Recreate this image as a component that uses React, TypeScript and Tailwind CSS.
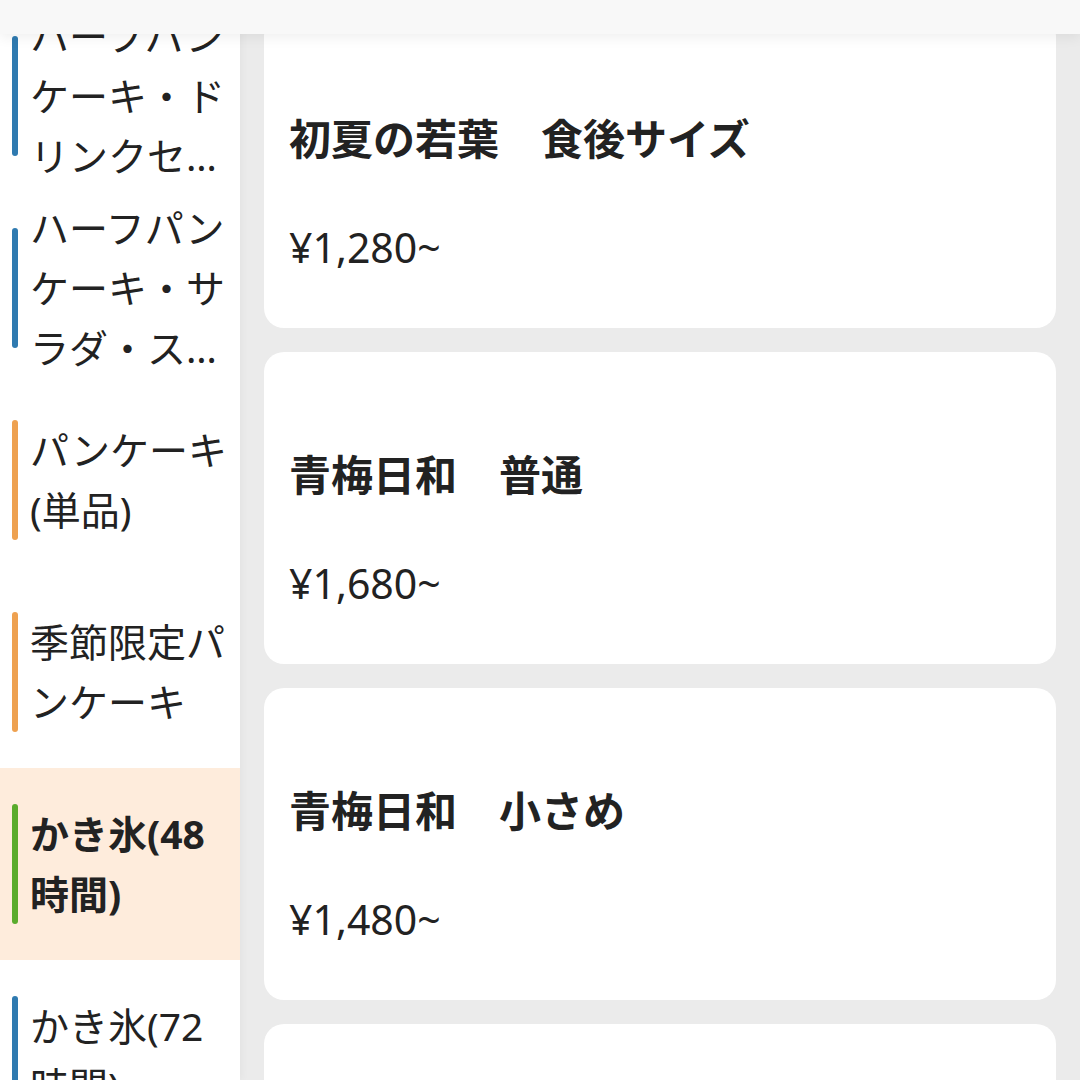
import React from 'react';

type Category = { name: string; color: string; active?: boolean };

const categories: Category[] = [
  { name: 'ハーフパンケーキ・ドリンクセット', color: 'bg-[#2f7ab0]' },
  { name: 'ハーフパンケーキ・サラダ・スープセット', color: 'bg-[#2f7ab0]' },
  { name: 'パンケーキ(単品)', color: 'bg-[#eea150]' },
  { name: '季節限定パンケーキ', color: 'bg-[#eea150]' },
  { name: 'かき氷(48時間)', color: 'bg-[#5aab2c]', active: true },
  { name: 'かき氷(72時間)', color: 'bg-[#2f7ab0]' },
];

const items = [
  { name: '初夏の若葉　食後サイズ', price: '¥1,280~' },
  { name: '青梅日和　普通', price: '¥1,680~' },
  { name: '青梅日和　小さめ', price: '¥1,480~' },
  { name: '青梅日和　大きめ', price: '¥1,980~' },
];

const font = { fontFamily: '"Noto Sans", "Noto Sans CJK JP", sans-serif' };

function SideItem({ cat }: { cat: Category }) {
  return (
    <div className={`flex items-center h-[192px] shrink-0 ${cat.active ? 'bg-[#feecdc]' : 'bg-white'}`}>
      <div className={`ml-3 mr-[12px] w-[6px] h-[120px] rounded-full shrink-0 ${cat.color}`} />
      <div
        className={`w-[202px] text-[39px] leading-[60px] text-[#222] line-clamp-3 break-all ${cat.active ? 'font-bold' : 'font-normal'}`}
      >
        {cat.name}
      </div>
    </div>
  );
}

export default function App() {
  return (
    <div className="relative h-[1080px] w-[1080px] overflow-hidden bg-[#ebebeb]" style={font}>
      <div className="absolute top-0 left-0 right-0 z-10 h-[34px] bg-[#f8f8f8] shadow-[0_3px_14px_rgba(0,0,0,0.07)]" />

      <div className="flex h-full">
        <aside className="w-[240px] shrink-0 flex flex-col bg-white shadow-[2px_0_8px_rgba(0,0,0,0.04)] z-[1]">
          {categories.map((c) => (
            <SideItem key={c.name} cat={c} />
          ))}
        </aside>

        <main className="flex-1 flex flex-col gap-6 px-6 pt-4">
          {items.map((it) => (
            <div key={it.name} className="h-[312px] shrink-0 rounded-[20px] bg-white px-[25px] pt-[91px]">
              <div className="text-[42px] leading-[1.5] font-bold text-[#222]">{it.name}</div>
              <div className="mt-[47px] text-[41px] leading-[1.5] text-[#222]">{it.price}</div>
            </div>
          ))}
        </main>
      </div>
    </div>
  );
}
